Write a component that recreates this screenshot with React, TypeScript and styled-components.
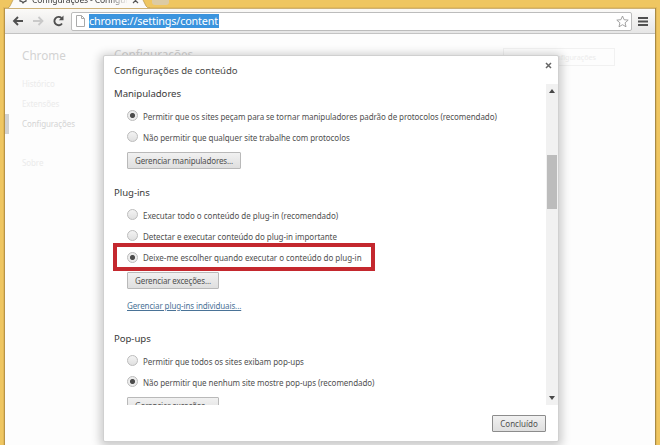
import React from "react";
import styled, { createGlobalStyle } from "styled-components";

const GlobalStyle = createGlobalStyle`
  * { box-sizing: border-box; }
  body { margin: 0; overflow: hidden; font-family: "Noto Sans", "Open Sans", sans-serif; }
`;

const Window = styled.div`
  width: 660px;
  height: 445px;
  overflow: hidden;
  display: flex;
  flex-direction: column;
  background: #efc661;
`;

const TabStrip = styled.div`
  flex: none;
  height: 8px;
  display: flex;
  padding-left: 8px;
`;

const Tab = styled.div`
  position: relative;
  width: 142px;
  height: 8px;
  display: flex;
  align-items: flex-start;
  overflow: hidden;
`;

const TabShape = styled.svg`
  position: absolute;
  inset: 0;
`;

const TabTitle = styled.span`
  position: relative;
  margin: -7px 0 0 24px;
  width: 96px;
  flex: none;
  overflow: hidden;
  white-space: nowrap;
  font-size: 8.5px;
  line-height: 14px;
  letter-spacing: -0.12px;
  color: #3c3c3c;
  mask-image: linear-gradient(90deg, #000 80%, transparent);
`;

const NewTab = styled.div`
  width: 17px;
  height: 5px;
  margin-left: 2px;
  border-radius: 0 0 3px 3px;
  background: #dccba4;
`;

const Frame = styled.div`
  flex: 1;
  min-height: 0;
  display: flex;
  flex-direction: column;
  border-left: 1px solid #b99445;
  border-right: 1px solid #a88a45;
  margin: 0 4px 0 4px;
  background: #fdfdfd;
  box-shadow: 0 0 0 1px #e2b959;
`;

const Toolbar = styled.div`
  flex: none;
  height: 26px;
  display: flex;
  align-items: center;
  padding: 0 6px 0 6px;
  background: linear-gradient(#fbfaf8, #e6e6e6);
  border-top: 1px solid #cdb176;
  border-bottom: 1px solid #c3c3c3;
`;

const NavIcons = styled.svg`
  flex: none;
  width: 56px;
  height: 16px;
`;

const AddressBar = styled.div`
  flex: none;
  width: 561px;
  height: 19px;
  margin-left: 4px;
  display: flex;
  align-items: center;
  background: #fff;
  border: 1px solid #bcbcbc;
  border-radius: 2px;
  padding: 0 2px 0 4px;
`;

const PageIcon = styled.svg`
  flex: none;
  width: 9px;
  height: 12px;
`;

const Url = styled.span`
  margin-left: 4px;
  width: 130px;
  height: 14px;
  line-height: 14px;
  font-size: 10.8px;
  letter-spacing: -0.16px;
  white-space: nowrap;
  color: #fff;
  background: #3b94de;
`;

const Star = styled.svg`
  margin-left: auto;
  width: 13px;
  height: 13px;
`;

const MenuIcon = styled.svg`
  flex: none;
  margin-left: 6px;
  width: 10px;
  height: 11px;
`;

const Page = styled.div`
  position: relative;
  flex: 1;
  min-height: 0;
  display: flex;
  background: #fdfdfd;
`;

const Sidebar = styled.nav`
  width: 106px;
  display: flex;
  flex-direction: column;
  color: #e4e4e4;
`;

const Brand = styled.div`
  padding: 11px 0 0 17px;
  height: 40px;
  font-size: 11.7px;
  line-height: 20px;
  color: #d3d3d3;
`;

const NavItem = styled.div<{ $active?: boolean; $gap?: boolean }>`
  height: 20px;
  line-height: 20px;
  padding-left: ${(p) => (p.$active ? 13 : 17)}px;
  margin-top: ${(p) => (p.$gap ? 19 : 0)}px;
  border-left: ${(p) => (p.$active ? "4px solid #d2d2d2" : "0")};
  font-size: 8px;
  letter-spacing: -0.1px;
  color: ${(p) => (p.$active ? "#d4d4d4" : "#ebebeb")};
`;

const PageHeader = styled.div`
  flex: 1;
  display: flex;
  justify-content: space-between;
  align-items: flex-start;
  padding: 10px 40px 0 3px;
  font-size: 11.7px;
  line-height: 20px;
  color: #d3d3d3;
`;

const SearchBox = styled.div`
  margin-top: 4px;
  width: 112px;
  height: 18px;
  border: 1px solid #f1f1f1;
  padding-right: 18px;
  text-align: right;
  font-size: 7.2px;
  line-height: 17px;
  color: #ececec;
  white-space: nowrap;
`;

const Dialog = styled.section`
  position: absolute;
  left: 98px;
  top: 21px;
  width: 456px;
  height: 387px;
  display: flex;
  flex-direction: column;
  background: #fff;
  border: 1px solid #d0d0d0;
  border-radius: 2px;
  box-shadow: 0 2px 10px 3px rgba(0, 0, 0, 0.2);
`;

const DialogHeader = styled.header`
  flex: none;
  height: 28px;
  display: flex;
  justify-content: space-between;
  align-items: center;
  padding: 2px 6px 0 10px;
`;

const DialogTitle = styled.h1`
  margin: 0;
  font-size: 9.6px;
  font-weight: 400;
  line-height: 16px;
  letter-spacing: -0.02px;
  color: #4a4a4a;
`;

const CloseIcon = styled.svg`
  width: 7px;
  height: 7px;
  margin-top: -12px;
`;

const ScrollView = styled.div`
  flex: none;
  height: 321px;
  display: flex;
  overflow: hidden;
`;

const Content = styled.div`
  flex: 1;
  padding-left: 10px;
  min-width: 0;
`;

const Section = styled.section<{ $height: number }>`
  height: ${(p) => p.$height}px;
`;

const Heading = styled.h2`
  margin: 0;
  height: 21px;
  line-height: 19px;
  font-size: 9.6px;
  font-weight: 400;
  letter-spacing: -0.05px;
  color: #3a3a3a;
`;

const Option = styled.label`
  display: flex;
  align-items: center;
  height: 21px;
  padding-left: 13px;
  gap: 5px;
`;

const Highlight = styled.div`
  width: 262px;
  height: 28px;
  margin: -3px 0 -4px -1px;
  padding-left: 1px;
  border: 4px solid #c4282e;
  display: flex;
  align-items: center;

  ${Option} {
    height: 20px;
    padding-left: 9px;
  }
`;

const Radio = styled.span<{ $checked?: boolean }>`
  flex: none;
  width: 11px;
  height: 11px;
  border-radius: 50%;
  border: 1px solid #bcbcbc;
  background: ${(p) =>
    p.$checked
      ? "radial-gradient(circle, #4c4c4c 0 2.1px, #ececec 3px)"
      : "linear-gradient(#f3f3f3, #e0e0e0)"};
`;

const Text = styled.span<{ $spacing: number }>`
  padding-top: 2px;
  font-size: 8px;
  line-height: 14px;
  white-space: nowrap;
  letter-spacing: ${(p) => p.$spacing}px;
  color: #505050;
`;

const Button = styled.button<{ $width: number; $strong?: boolean }>`
  display: block;
  flex: none;
  width: ${(p) => p.$width}px;
  height: 17px;
  padding: 1px 0 0;
  border: 1px solid ${(p) => (p.$strong ? "#8c8c8c" : "#b9b9b9")};
  border-radius: 1px;
  background: linear-gradient(#f1f1f1, #dfdfdf);
  font: 8px/14px "Noto Sans", "Open Sans", sans-serif;
  letter-spacing: ${(p) => (p.$strong ? 0 : -0.15)}px;
  white-space: nowrap;
  text-align: center;
  color: #505050;
`;

const Actions = styled.div`
  padding: 5px 0 0 13px;
`;

const Link = styled.a`
  display: block;
  width: max-content;
  margin: 10px 0 0 13px;
  font-size: 8px;
  line-height: 14px;
  letter-spacing: -0.11px;
  color: #4a7397;
  text-decoration: underline;
`;

const Scrollbar = styled.div`
  flex: none;
  width: 12px;
  display: flex;
  flex-direction: column;
  align-items: center;
  background: #f1f1f1;
`;

const Arrow = styled.svg`
  width: 6px;
  height: 4px;
  margin: 5px 0;
`;

const Thumb = styled.div`
  width: 10px;
  height: 54px;
  margin: 57px 0 auto;
  background: #bcbcbc;
`;

const DialogFooter = styled.footer`
  flex: 1;
  display: flex;
  justify-content: flex-end;
  padding: 10px 12px 0 0;
`;

type Choice = { text: string; spacing: number; checked?: boolean };

const handlers: Choice[] = [
  { text: "Permitir que os sites peçam para se tornar manipuladores padrão de protocolos (recomendado)", spacing: -0.07, checked: true },
  { text: "Não permitir que qualquer site trabalhe com protocolos", spacing: -0.06 },
];
const plugins: Choice[] = [
  { text: "Executar todo o conteúdo de plug-in (recomendado)", spacing: -0.02 },
  { text: "Detectar e executar conteúdo do plug-in importante", spacing: -0.04 },
];
const popups: Choice[] = [
  { text: "Permitir que todos os sites exibam pop-ups", spacing: -0.05 },
  { text: "Não permitir que nenhum site mostre pop-ups (recomendado)", spacing: -0.06, checked: true },
];

const RadioOption = ({ text, spacing, checked }: Choice) => (
  <Option>
    <Radio $checked={checked} />
    <Text $spacing={spacing}>{text}</Text>
  </Option>
);

export default function App() {
  return (
    <Window>
      <GlobalStyle />
      <TabStrip>
        <Tab>
          <TabShape width="142" height="8" viewBox="0 0 142 8">
            <path d="M0 8 Q2 7 3 4 L5 0 H135 L138 6 Q139 8 142 8Z" fill="#fbfaf8" />
            <path d="M0 8 Q2 7 3 4 L5 0 M135 0 L138 6 Q139 8 142 8" fill="none" stroke="#b8954a" strokeWidth=".7" />
            <path d="M12 -1 L12 1 L14 1.5 L15 3 L16 1.8 L18 1 L18 -1" fill="none" stroke="#555" strokeWidth="1.3" />
            <path d="M125 -2 L130 3 M130 -2 L125 3" stroke="#555" strokeWidth="1.2" />
          </TabShape>
          <TabTitle>Configurações - Configurações</TabTitle>
        </Tab>
        <NewTab />
      </TabStrip>
      <Frame>
        <Toolbar>
          <NavIcons viewBox="0 0 56 16">
            <path d="M12 8 H3.5 M7 4 L3 8 L7 12" fill="none" stroke="#505050" strokeWidth="1.9" />
            <path d="M22 8 H31 M27.5 4 L31.5 8 L27.5 12" fill="none" stroke="#c9c9c9" strokeWidth="1.8" />
            <path d="M51 10.5 A4.2 4.2 0 1 1 50.5 5" fill="none" stroke="#505050" strokeWidth="1.9" />
            <path d="M52.5 2.6 V7.3 H47.8Z" fill="#505050" />
          </NavIcons>
          <AddressBar>
            <PageIcon viewBox="0 0 9 12">
              <path d="M.5 .5 H5.5 L8.5 3.5 V11.5 H.5Z M5.5 .5 V3.5 H8.5" fill="#fff" stroke="#aaa" />
            </PageIcon>
            <Url>chrome://settings/content</Url>
            <Star viewBox="0 0 13 13">
              <path d="M6.5 1 L8.1 4.7 L12.2 5.1 L9.1 7.8 L10 11.8 L6.5 9.7 L3 11.8 L3.9 7.8 L.8 5.1 L4.9 4.7Z" fill="#fff" stroke="#999" strokeWidth=".9" />
            </Star>
          </AddressBar>
          <MenuIcon viewBox="0 0 10 11">
            <path d="M0 2 H10 M0 5.5 H10 M0 9 H10" stroke="#505050" strokeWidth="2" />
          </MenuIcon>
        </Toolbar>
        <Page>
          <Sidebar>
            <Brand>Chrome</Brand>
            <NavItem>Histórico</NavItem>
            <NavItem>Extensões</NavItem>
            <NavItem $active>Configurações</NavItem>
            <NavItem $gap>Sobre</NavItem>
          </Sidebar>
          <PageHeader>
            Configurações
            <SearchBox>Pesquisar configurações</SearchBox>
          </PageHeader>
          <Dialog>
            <DialogHeader>
              <DialogTitle>Configurações de conteúdo</DialogTitle>
              <CloseIcon viewBox="0 0 7 7">
                <path d="M1 1 L6 6 M6 1 L1 6" stroke="#666" strokeWidth="1.5" />
              </CloseIcon>
            </DialogHeader>
            <ScrollView>
              <Content>
                <Section $height={99}>
                  <Heading>Manipuladores</Heading>
                  {handlers.map((c) => <RadioOption key={c.text} {...c} />)}
                  <Actions>
                    <Button $width={114}>Gerenciar manipuladores...</Button>
                  </Actions>
                </Section>
                <Section $height={146}>
                  <Heading>Plug-ins</Heading>
                  {plugins.map((c) => <RadioOption key={c.text} {...c} />)}
                  <Highlight>
                    <RadioOption text="Deixe-me escolher quando executar o conteúdo do plug-in" spacing={-0.03} checked />
                  </Highlight>
                  <Actions>
                    <Button $width={92}>Gerenciar exceções...</Button>
                  </Actions>
                  <Link>Gerenciar plug-ins individuais...</Link>
                </Section>
                <Section $height={99}>
                  <Heading>Pop-ups</Heading>
                  {popups.map((c) => <RadioOption key={c.text} {...c} />)}
                  <Actions>
                    <Button $width={92}>Gerenciar exceções...</Button>
                  </Actions>
                </Section>
              </Content>
              <Scrollbar>
                <Arrow viewBox="0 0 6 4"><path d="M3 0 L6 4 H0Z" fill="#484848" /></Arrow>
                <Thumb />
                <Arrow viewBox="0 0 6 4"><path d="M3 4 L6 0 H0Z" fill="#484848" /></Arrow>
              </Scrollbar>
            </ScrollView>
            <DialogFooter>
              <Button $width={54} $strong>Concluído</Button>
            </DialogFooter>
          </Dialog>
        </Page>
      </Frame>
    </Window>
  );
}
